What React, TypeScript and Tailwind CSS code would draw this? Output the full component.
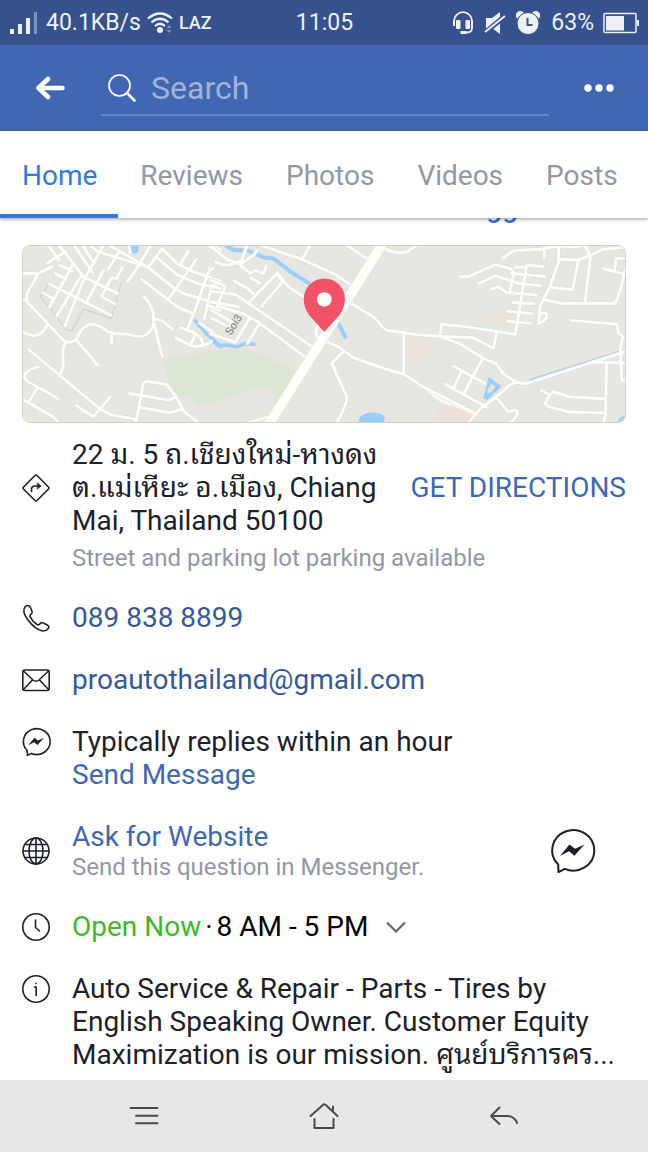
import type { ReactNode } from 'react';

const tabs = ['Home', 'Reviews', 'Photos', 'Videos', 'Posts'];

// Street lines of the map, one list per tile (3 units to the pixel)
const westRoads = [
  'M36 115H80L124 94',
  'M80 115Q74 135 56 160Q44 180 48 200L160 318Q185 330 200 305Q215 270 245 267Q270 272 290 290Q320 300 345 296Q385 310 405 300Q430 285 430 255Q430 215 400 185',
  'M36 194H48',
  'M110 270Q95 300 70 302Q50 298 36 290',
  'M430 252Q455 252 470 270L488 284',
  'M430 265L455 364',
  'M303 298V326',
  'M197 316L262 392',
  'M166 322Q152 345 157 370Q160 395 150 414',
  'M54 344L265 520L300 540L378 554',
  'M196 512L248 546L298 487',
  'M82 396Q58 400 42 418Q36 430 50 440L142 492',
  'M80 458L54 500',
  'M36 494L130 548L145 568',
  'M376 565L398 445Q402 440 412 440L468 448L498 488L520 530L565 565',
  'M357 476L475 496L498 486',
  'M388 518L478 534L518 522',
  'M112 30L145 75',
  'M108 84L165 48',
  'M145 30L222 130L232 132L320 175',
  'M190 30L245 112',
  'M278 30L216 140L162 272',
  'M240 30L258 48L410 95',
  'M215 30L250 85',
  'M295 30L412 96L492 160L520 175L602 200L630 205',
  'M420 30L388 85L350 140',
  'M325 50L292 102',
  'M355 30L358 52',
  'M116 146L300 240',
  'M148 90L185 108',
  'M133 115L165 132',
  'M96 172L125 190',
  'M188 85L116 216',
  'M212 120L138 242',
  'M278 106L230 196',
  'M335 96L318 130L302 128L272 185L312 206',
  'M392 132L500 215L548 236',
  'M455 40L412 96',
  'M455 40L500 85L550 110L630 138',
  'M440 68L500 118L560 145L630 160',
  'M534 48L508 90',
  'M558 72L474 192',
  'M598 98L552 230L530 284',
  'M630 145L604 150L582 250',
  'M590 210L630 226',
  'M604 30L630 44',
  'M510 278L548 292Q575 305 578 328',
  'M496 308L540 332Q565 340 606 320',
  'M556 296L542 326',
  'M568 264L630 308',
  'M604 248L630 260',
  'M615 80L630 86',
];

const centreRoads = [
  'M0 32L50 72L90 88L130 60L140 45',
  'M110 30L90 88',
  'M15 80Q50 100 85 78',
  'M150 30L275 72L380 120L425 150',
  'M300 30L278 70',
  'M90 90L120 115L135 105L160 115L168 92',
  'M72 138L112 160L130 176',
  'M122 128L150 145',
  'M118 200L165 150L200 115L218 140L155 212',
  'M200 112L235 155L285 188',
  'M0 135L45 152L20 215',
  'M0 168L75 178L120 208L310 338',
  'M0 200L85 215',
  'M28 215L100 236L145 262L288 368',
  'M0 224L68 262L50 280',
  'M5 250L45 270',
  'M0 296L75 322L118 250',
  'M148 265L112 325',
  'M0 105L10 98',
  'M325 265Q315 290 320 305L345 315',
  'M345 318L385 335L430 368L520 400L582 418L640 455L690 495L795 540',
  'M400 350L365 385L410 485Q415 500 380 565',
  'M410 30L475 72',
  'M425 205L490 245L528 285L630 300',
  'M582 290L582 415',
  'M525 40Q565 60 595 48L620 30',
  'M110 565L180 545',
];

const eastRoads = [
  'M0 300L65 304L160 308L222 340L232 294',
  'M62 302L66 268L130 274L288 298L322 90L372 94',
  'M62 305L118 325L192 370L232 388L250 415L292 444',
  'M122 125H145L228 88L276 102',
  'M178 145L228 122L300 145L364 152',
  'M216 162L236 155L262 172L352 180',
  'M276 102L284 114L272 165',
  'M288 96H320',
  'M276 114L376 124',
  'M280 202L344 206',
  'M264 228L338 236',
  'M262 258L334 265',
  'M250 68L285 46L365 42L415 32L470 35L500 28',
  'M375 42V68',
  'M418 32V80L392 155L362 215L358 266Q385 255 382 236L362 234',
  'M418 72L478 74L515 60L550 42L618 36',
  'M498 30L514 65L498 200',
  'M478 74L460 164L392 156',
  'M375 194L430 205L588 205Q602 180 618 105',
  'M552 100L612 116',
  'M618 70H592L586 108',
  'M455 256L595 268L598 294L612 305L604 340L608 435L618 440',
  'M146 565L185 520L232 485L270 452L292 442L318 447L520 382L618 350',
  'M525 382L618 384',
  'M562 384L560 540L552 565',
  'M102 394L205 450',
  'M190 370L134 474',
  'M126 408L104 456',
  'M76 448L200 516',
  'M0 450L165 535',
  'M232 490L265 530L290 526Q305 535 272 565',
  'M366 467L392 480L402 470L450 486L556 492',
  'M392 480L378 505Q380 515 398 518L450 532L556 535',
];

function Roads({ lines }: { lines: string[] }) {
  return (
    <g fill="none" strokeLinecap="round" strokeLinejoin="round">
      <g stroke="#dcdbd4" strokeWidth="12">
        {lines.map((d) => (
          <path key={d} d={d} />
        ))}
      </g>
      <g stroke="#fdfdfa" strokeWidth="9">
        {lines.map((d) => (
          <path key={d} d={d} />
        ))}
      </g>
    </g>
  );
}

function LocationMap() {
  return (
    <svg
      viewBox="0 0 604 178"
      preserveAspectRatio="xMidYMid slice"
      className="block h-full w-full"
      role="img"
      aria-label="Map"
    >
      <rect width="604" height="178" fill="#e7e7e2" />
      <g transform="translate(-12 -10) scale(.33333)">
        <path d="M460 372L630 345L700 340L780 370L840 400L890 392L800 565L790 470Q740 440 690 480L560 518L535 480L505 490Q470 450 460 372Z" fill="#dbe6d6" />
        <path d="M332 140L302 250L218 222L184 286L165 284L134 240L88 184L115 145" fill="none" stroke="#d3d3cd" strokeWidth="4" />
        <path d="M358 30H384V48Q370 66 358 46Z" fill="#9bcffb" />
        <path d="M554 256L590 298L632 335" fill="none" stroke="#9bcffb" strokeWidth="11" strokeLinecap="round" />
        <Roads lines={westRoads} />
      </g>
      <g transform="translate(188 -10) scale(.33333)">
        <path d="M45 30L70 44L115 46L160 66L190 70L245 112L300 146M384 262L408 310" fill="none" stroke="#9bcffb" strokeWidth="12" />
        <path d="M8 318L24 332L50 330L80 336L104 326L136 328" fill="none" stroke="#9bcffb" strokeWidth="11" />
        <path d="M446 566Q445 535 485 533Q525 535 525 550L522 566Z" fill="#9bcffb" />
        <path d="M590 305H665L650 375H590Z" fill="#eee4da" opacity=".7" />
        <Roads lines={centreRoads} />
        <path d="M522 20L172 575" stroke="#ece8c4" strokeWidth="32" />
        <path d="M522 20L172 575" stroke="#fffffb" strokeWidth="28" />
        <text x="62" y="302" transform="rotate(-58 62 302)" className="fill-[#777777] text-[33px]">
          Soi3
        </text>
      </g>
      <g transform="translate(398 -10) scale(.33333)">
        <path d="M172 235L262 240L260 270L175 255Z" fill="#ece2d8" opacity=".7" />
        <path d="M55 520L100 512L160 540L140 566H40Z" fill="#ece2d8" />
        <path d="M330 436L520 376L600 350" stroke="#9bcffb" strokeWidth="6" fill="none" />
        <Roads lines={eastRoads} />
        <path d="M208 426L246 454L204 496L192 490ZM216 446L204 464V476L216 472L228 456Z" fill="#9bcffb" fillRule="evenodd" />
        <path d="M594 566Q598 545 620 543V566Z" fill="#9bcffb" />
      </g>
      <g transform="translate(188 -10) scale(.33333)">
        <path d="M343 291L297 240Q281 218 281 192A62 62 0 0 1 405 192Q405 218 389 240Z" fill="#f35369" />
        <circle cx="343" cy="193" r="22" fill="#fff" />
      </g>
    </svg>
  );
}

function LineIcon({ children }: { children: ReactNode }) {
  return (
    <svg
      viewBox="0 0 28 28"
      className="h-7 w-7 shrink-0 overflow-visible"
      fill="none"
      stroke="#1d2129"
      strokeWidth="1.6"
      strokeLinecap="round"
      strokeLinejoin="round"
      aria-hidden="true"
    >
      {children}
    </svg>
  );
}

function MessengerShape() {
  return (
    <>
      <path d="M5.200 22.600A13.400 12.900 0 1 1 9.400 25.400L5.400 27.400Z" />
      <path d="M6.300 17.200L12.400 9.800L15.900 12.500L21.900 9.800L15.600 17L12.100 14.200Z" fill="#1d2129" stroke="none" />
    </>
  );
}

function StatusBar() {
  return (
    <div className="flex h-[45px] items-center bg-[#35528c] text-[23px] text-[#eef1f7]">
      <div className="flex flex-1 items-center pl-[10px]">
        <svg viewBox="0 0 28 24" className="mr-2 h-6 w-7" fill="#eef1f7" aria-hidden="true">
          <path d="M0 18h4v5H0zM8 13h4v10H8zM16 7h4v16h-4z" />
          <path d="M24 1h3v22h-3z" opacity=".4" />
        </svg>
        <span>40.1KB/s</span>
        <svg viewBox="0 0 26 22" className="ml-[6px] h-[22px] w-[26px]" fill="none" stroke="#eef1f7" strokeWidth="2.2" aria-hidden="true">
          <path d="M1 6.5Q13-3.5 25 6.5M4.5 10.5Q13 3 21.5 10.5M8 14Q13 9.5 18 14" />
          <circle cx="13" cy="18" r="3" fill="#eef1f7" stroke="none" />
          <path d="M19.5 16L22 13L24.5 16ZM19.5 18L22 21L24.5 18Z" fill="#eef1f7" stroke="none" opacity=".4" />
        </svg>
        <span className="ml-[6px] text-[18px] font-medium">LAZ</span>
      </div>
      <span>11:05</span>
      <div className="flex flex-1 items-center justify-end pr-[9px]">
        <svg viewBox="0 0 20 24" className="h-6 w-5" fill="#eef1f7" aria-hidden="true">
          <path d="M1 14V10A9 8.8 0 0 1 19 10V17Q19 21.5 14 21.5H9" fill="none" stroke="#eef1f7" strokeWidth="1.8" />
          <rect x="3" y="9" width="4.5" height="9" rx="1" />
          <rect x="12.5" y="9" width="4.5" height="9" rx="1" />
          <path d="M0 9h2v6H0zM18 9h2v8h-2zM7.5 20h6v3h-6z" />
        </svg>
        <svg viewBox="0 0 22 24" className="ml-[11px] h-6 w-[22px]" fill="#eef1f7" aria-hidden="true">
          <path d="M2 7h6l8-6v22l-8-6H2z" />
          <path d="M0 22.5L21 5" stroke="#35528c" strokeWidth="5" />
          <path d="M1 21L21 5" stroke="#eef1f7" strokeWidth="1.8" />
        </svg>
        <svg viewBox="0 0 24 24" className="ml-[10px] h-6 w-6" aria-hidden="true">
          <path d="M1 7A4 4 0 0 1 7.5 2ZM23 7A4 4 0 0 0 16.5 2Z" fill="#eef1f7" stroke="#eef1f7" />
          <circle cx="12" cy="12.5" r="11" fill="#eef1f7" stroke="#35528c" strokeWidth="1" />
          <path d="M11.5 7V14H16.5" fill="none" stroke="#35528c" strokeWidth="2" />
        </svg>
        <span className="ml-[11px]">63%</span>
        <svg viewBox="0 0 36 22" className="ml-[9px] h-[22px] w-9" aria-hidden="true">
          <rect x="1" y="1.5" width="32" height="19" rx="1" fill="none" stroke="#eef1f7" strokeWidth="1.5" />
          <rect x="3" y="4" width="18" height="14.5" fill="#eef1f7" />
          <path d="M34 8h2v6h-2z" fill="#eef1f7" />
        </svg>
      </div>
    </div>
  );
}

function SearchHeader() {
  return (
    <header className="flex h-[86px] items-center bg-[#4267b2] pr-[33px] pl-[35px]">
      <button type="button" aria-label="Back">
        <svg viewBox="0 0 30 24" className="h-6 w-[30px]" fill="none" stroke="#fff" strokeWidth="4.6" strokeLinecap="round" strokeLinejoin="round">
          <path d="M27.5 12H4M13 3L3.5 12L13 21" />
        </svg>
      </button>
      <label className="mt-[2px] ml-9 flex h-[54px] flex-1 items-center border-b-2 border-[#6885c1] pl-[6px]">
        <svg viewBox="0 0 30 30" className="mr-[14px] h-[30px] w-[30px] shrink-0" fill="none" stroke="#fff" aria-hidden="true">
          <circle cx="12.5" cy="12.5" r="10.5" strokeWidth="1.7" />
          <path d="M20 20L27.5 27.5" strokeWidth="2.6" strokeLinecap="round" />
        </svg>
        <input
          type="text"
          aria-label="Search"
          placeholder="Search"
          className="w-full min-w-0 bg-transparent text-[32px] text-white outline-none placeholder:text-[#a1b3d9]"
        />
      </label>
      <button type="button" aria-label="More options" className="ml-[34px]">
        <svg viewBox="0 0 32 8" className="h-2 w-8" fill="#fff">
          <circle cx="5" cy="4" r="3.7" />
          <circle cx="16" cy="4" r="3.7" />
          <circle cx="27" cy="4" r="3.7" />
        </svg>
      </button>
    </header>
  );
}

export default function App() {
  return (
    <div className="flex min-h-screen flex-col bg-white font-[Roboto,'Noto_Sans_Thai_Looped','Droid_Sans_Thai',Loma,Waree,Garuda,'Noto_Sans',sans-serif] text-[28px] leading-[33px] text-[#1d2129]">
      <StatusBar />
      <SearchHeader />

      <nav className="sticky top-0 z-10 flex h-[87px] bg-white text-[#9197a3] shadow-[0_1px_4px_rgba(0,0,0,0.4)]">
        {tabs.map((tab) => (
          <a
            key={tab}
            href={'#' + tab.toLowerCase()}
            className={
              tab === 'Home'
                ? 'flex items-center border-b-4 border-[#3578e5] pt-[6px] pr-[21px] pl-[22px] text-[#3578e5]'
                : 'flex items-center border-b-4 border-transparent pt-[6px] pr-[21px] pl-[22px]'
            }
          >
            {tab}
          </a>
        ))}
      </nav>

      <main className="flex-1 px-[22px] pb-2">
        {/* scrolled under the tab bar */}
        <div className="-mt-[27px] flex justify-end">
          <a href="#edits" className="font-medium text-[#3578e5]">
            Suggest Edits
          </a>
        </div>

        <div className="mt-[21px] h-[178px] overflow-hidden rounded-lg border border-[#cfcfca]">
          <LocationMap />
        </div>

        <section className="mt-[15px] flex flex-col gap-[29px]">
          <div>
            <div className="flex items-center gap-[22px]">
              <LineIcon>
                <path d="M13 1.5Q14 .5 15 1.5L26.5 13Q27.5 14 26.5 15L15 26.5Q14 27.5 13 26.5L1.5 15Q.5 14 1.5 13Z" />
                <path d="M9.5 17.5V15.5Q9.5 12 13 12H18" />
                <path d="M15.5 9L19 12L15.5 15Z" fill="#1d2129" strokeWidth=".6" />
              </LineIcon>
              <address className="flex-1 whitespace-nowrap not-italic">
                22 ม. 5 ถ.เชียงใหม่-หางดง
                <br />
                ต.แม่เหียะ อ.เมือง, Chiang
                <br />
                Mai, Thailand 50100
              </address>
              <a href="#directions" className="whitespace-nowrap text-[#4267b2]">
                GET DIRECTIONS
              </a>
            </div>
            <p className="mt-[7px] pl-[50px] text-2xl leading-7 text-[#9197a3]">
              Street and parking lot parking available
            </p>
          </div>

          <div className="flex items-center gap-[22px]">
            <LineIcon>
              <path d="M6.6 1.8Q4.5 .8 2.8 3.2Q-.2 7.5 5.8 15.8Q13 25.5 20.5 27Q24 27.3 26.3 24.5Q27.5 22.5 25.6 21.2L21.3 18.9Q19.5 18 18.2 19.5Q16.8 21.5 15 20.5Q10.5 17.5 8.3 13.2Q7.5 11.3 9.2 10.2Q10.8 9 10 7.3L8.3 3.3Q7.7 2.2 6.6 1.8Z" />
            </LineIcon>
            <a href="tel:0898388899" className="text-[#365899]">
              089 838 8899
            </a>
          </div>

          <div className="flex items-center gap-[22px]">
            <LineIcon>
              <rect x=".8" y="4" width="26.4" height="20.5" rx="2" />
              <path d="M1.5 5L11 14Q14 16.5 17 14L26.5 5M1.5 23.5L10.5 14M26.5 23.5L17.5 14" />
            </LineIcon>
            <a href="mailto:proautothailand@gmail.com" className="text-[#365899]">
              proautothailand@gmail.com
            </a>
          </div>

          <div className="flex gap-[22px]">
            <div className="flex h-[33px] items-center">
              <LineIcon>
                <MessengerShape />
              </LineIcon>
            </div>
            <div>
              <p>Typically replies within an hour</p>
              <a href="#message" className="block text-[#4267b2]">
                Send Message
              </a>
            </div>
          </div>

          <div className="flex items-center gap-[22px]">
            <LineIcon>
              <circle cx="14" cy="14" r="13" />
              <ellipse cx="14" cy="14" rx="7" ry="13" />
              <path d="M14 1V27M1 14H27M3 7.5H25M3 20.5H25" />
            </LineIcon>
            <div className="flex-1">
              <a href="#website" className="block text-[#4267b2]">
                Ask for Website
              </a>
              <p className="text-2xl leading-7 text-[#9197a3]">Send this question in Messenger.</p>
            </div>
            <button type="button" aria-label="Open Messenger" className="mr-8">
              <svg viewBox="0 0 28 28" className="h-11 w-11 overflow-visible" fill="none" stroke="#1d2129" strokeWidth="1.3" strokeLinejoin="round">
                <MessengerShape />
              </svg>
            </button>
          </div>

          <div className="flex items-center gap-[22px]">
            <LineIcon>
              <circle cx="14" cy="14" r="13.2" />
              <path d="M13.5 7V14.5L17.5 18" />
            </LineIcon>
            <button type="button" className="flex items-center text-black">
              <span className="text-[#42b72a]">Open Now</span>
              <span className="px-1">·</span>
              <span>8 AM - 5 PM</span>
              <svg viewBox="0 0 20 12" className="ml-[18px] h-3 w-5" fill="none" stroke="#606770" strokeWidth="2.2" aria-hidden="true">
                <path d="M1 1.5L10 10.5L19 1.5" />
              </svg>
            </button>
          </div>

          <div className="flex gap-[22px]">
            <div className="flex h-[33px] items-center">
              <LineIcon>
                <circle cx="14" cy="14" r="13.2" />
                <path d="M12.5 12H14.2V20.5M14 8.3V8.5" />
              </LineIcon>
            </div>
            <p className="whitespace-nowrap">
              Auto Service &amp; Repair - Parts - Tires by
              <br />
              English Speaking Owner. Customer Equity
              <br />
              Maximization is our mission. ศูนย์บริการคร...
            </p>
          </div>
        </section>
      </main>

      <footer className="grid h-[72px] grid-cols-[1fr_72px_1fr] items-center bg-[#e8e8e8] px-[108px]">
        <button type="button" aria-label="Menu" className="flex h-[72px] w-[72px] items-center justify-center">
          <svg viewBox="0 0 30 20" className="h-5 w-[30px]" stroke="#4a4a4a" strokeWidth="2" strokeLinecap="round">
            <path d="M1.5 2H28.5M7 9.7H28.5M7 17.3H28.5" />
          </svg>
        </button>
        <button type="button" aria-label="Home screen" className="flex h-[72px] items-center justify-center">
          <svg viewBox="0 0 30 28" className="h-7 w-[30px]" fill="none" stroke="#4a4a4a" strokeWidth="2" strokeLinecap="round" strokeLinejoin="round">
            <path d="M1.5 14L14.5 2.5Q15.5 2 16.5 2.8L28.5 14M24 9V4.5M5.5 17V26H24.5V17" />
          </svg>
        </button>
        <button type="button" aria-label="Back one screen" className="ml-auto flex h-[72px] w-[72px] items-center justify-center">
          <svg viewBox="0 0 30 20" className="h-5 w-[30px]" fill="none" stroke="#4a4a4a" strokeWidth="2" strokeLinecap="round" strokeLinejoin="round">
            <path d="M10.5 1.5L2 10L10.5 18M2 10H19Q25.5 10.5 28 17" />
          </svg>
        </button>
      </footer>
    </div>
  );
}
